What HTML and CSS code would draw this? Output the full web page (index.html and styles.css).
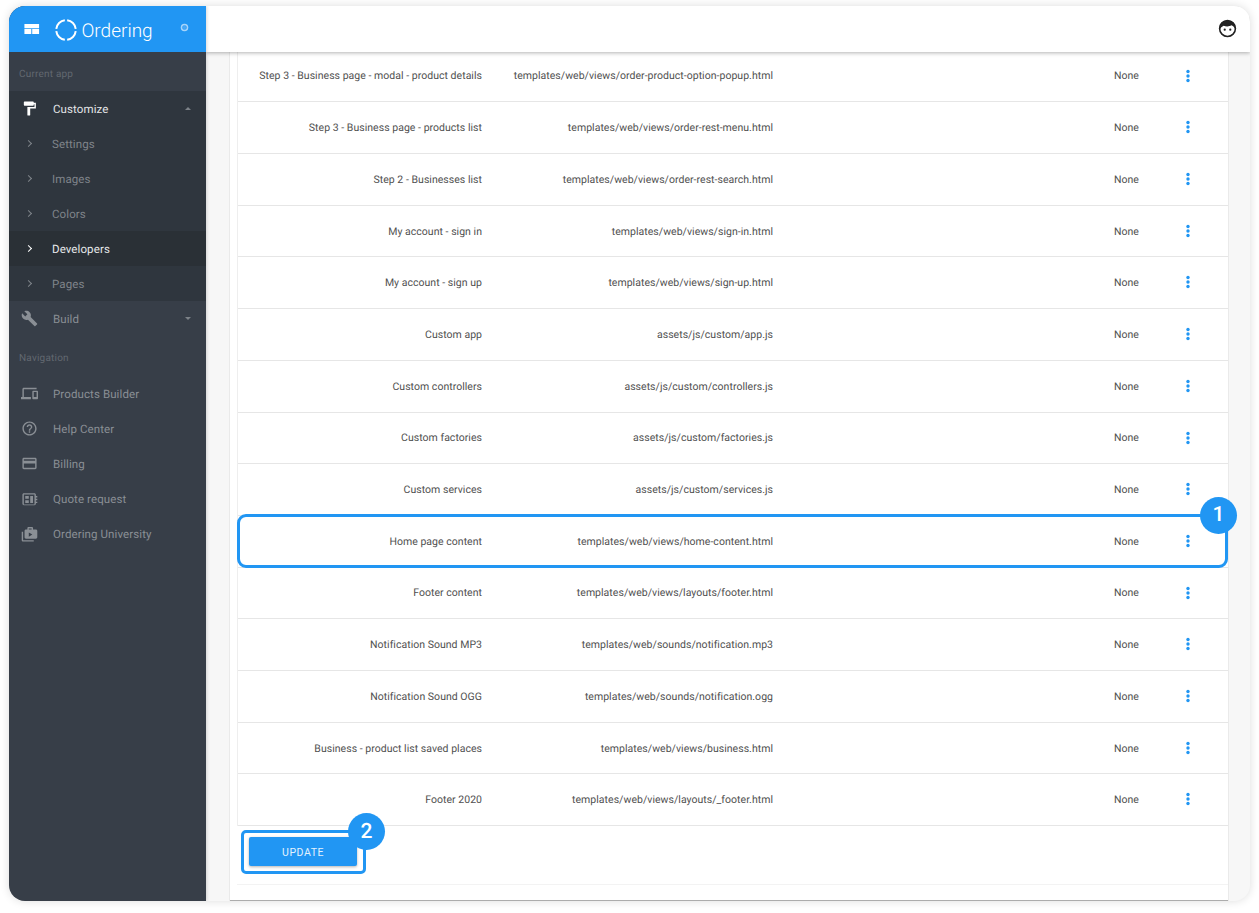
FILE: index.html
```html
<!DOCTYPE html>
<html lang="en">
<head>
<meta charset="utf-8">
<title>Ordering</title>
<link rel="stylesheet" href="styles.css">
</head>
<body>
<div class="window">
  <aside class="sidebar">
    <div class="brand">
      <svg class="brand-menu" viewBox="0 0 16 12"><path d="M0 0h16v4.500H0zM0 5.500h7.500V11H0zM8.500 5.500H16V11H8.500z"/></svg>
      <svg class="brand-ring" viewBox="0 0 24 24"><circle cx="12" cy="12" r="9.800" pathLength="100" stroke-dasharray="21 4" stroke-dashoffset="-2"/></svg>
      <span class="brand-name">Ordering</span>
      <svg class="brand-dot" viewBox="0 0 10 10"><circle cx="5" cy="5" r="4.200" class="dot-o"/><circle cx="5" cy="5" r="2.300" class="dot-i"/></svg>
    </div>
    <div class="nav-label label-first">Current app</div>
    <div class="group">
      <div class="nav-item nav-open">
        <svg class="ic" viewBox="0 0 24 24"><path d="M18 4V3c0-.55-.45-1-1-1H5c-.55 0-1 .45-1 1v4c0 .55.45 1 1 1h12c.55 0 1-.45 1-1V6h1v4H9v11c0 .55.45 1 1 1h2c.55 0 1-.45 1-1v-9h8V4h-3z"/></svg>
        <span>Customize</span><i class="caret caret-up"></i>
      </div>
      <div class="sub-item"><b class="chev"></b><span>Settings</span></div>
      <div class="sub-item"><b class="chev"></b><span>Images</span></div>
      <div class="sub-item"><b class="chev"></b><span>Colors</span></div>
      <div class="sub-item sub-active"><b class="chev"></b><span>Developers</span></div>
      <div class="sub-item"><b class="chev"></b><span>Pages</span></div>
    </div>
    <div class="nav-item">
      <svg class="ic" viewBox="0 0 24 24"><path d="M22.700 19l-9.100-9.100c.9-2.300.4-5-1.500-6.900-2-2-5-2.400-7.400-1.300L9 6 6 9 1.600 4.700C.4 7.100.9 10.100 2.900 12.100c1.900 1.900 4.600 2.400 6.900 1.500l9.100 9.100c.4.4 1 .4 1.400 0l2.300-2.300c.5-.4.5-1.100.1-1.400z"/></svg>
      <span>Build</span><i class="caret"></i>
    </div>
    <div class="nav-label">Navigation</div>
    <div class="nav-item">
      <svg class="ic" viewBox="0 0 24 24"><path d="M4 6h18V4H4c-1.100 0-2 .9-2 2v11H0v3h14v-3H4V6zm19 2h-6c-.55 0-1 .45-1 1v10c0 .55.45 1 1 1h6c.55 0 1-.45 1-1V9c0-.55-.45-1-1-1zm-1 9h-4v-7h4v7z"/></svg>
      <span>Products Builder</span>
    </div>
    <div class="nav-item">
      <svg class="ic" viewBox="0 0 24 24"><path d="M11 18h2v-2h-2v2zm1-16C6.480 2 2 6.480 2 12s4.480 10 10 10 10-4.480 10-10S17.520 2 12 2zm0 18c-4.410 0-8-3.590-8-8s3.590-8 8-8 8 3.590 8 8-3.590 8-8 8zm0-14c-2.210 0-4 1.790-4 4h2c0-1.100.9-2 2-2s2 .9 2 2c0 2-3 1.750-3 5h2c0-2.250 3-2.500 3-5 0-2.210-1.790-4-4-4z"/></svg>
      <span>Help Center</span>
    </div>
    <div class="nav-item">
      <svg class="ic" viewBox="0 0 24 24"><path d="M20 4H4c-1.110 0-1.990.89-1.990 2L2 18c0 1.110.89 2 2 2h16c1.110 0 2-.89 2-2V6c0-1.110-.89-2-2-2zm0 14H4v-6h16v6zm0-10H4V6h16v2z"/></svg>
      <span>Billing</span>
    </div>
    <div class="nav-item">
      <svg class="ic" viewBox="0 0 24 24"><path d="M4 3h15c1 0 2 1 2 2v2h2v2h-2v2h2v2h-2v2h2v2h-2v1c0 1-1 2-2 2H4c-1 0-2-1-2-2V5c0-1 1-2 2-2zm0 2v14h15V5H4zm2 2h5v4H6V7zm7 0h4v10h-4V7zm-7 6h5v4H6v-4z" fill-rule="evenodd"/></svg>
      <span>Quote request</span>
    </div>
    <div class="nav-item">
      <svg class="ic" viewBox="0 0 24 24"><path d="M1 8h2v12h15v2H3c-1.100 0-2-.9-2-2V8zm8-3V3c0-.8.7-1.500 1.500-1.500h5c.8 0 1.500.7 1.500 1.500v2h4c1.100 0 2 .9 2 2v9c0 1.100-.9 2-2 2H7c-1.100 0-2-.9-2-2V7c0-1.100.9-2 2-2h2zm2 0h4V3.500h-4V5zm0 4v6l5-3-5-3z" fill-rule="evenodd"/></svg>
      <span>Ordering University</span>
    </div>
  </aside>

  <div class="main">
    <header class="topbar">
      <svg class="avatar" viewBox="0 0 24 24">
        <circle cx="12" cy="12" r="10" class="face"/>
        <path d="M2 12C2 6 6.500 2 12 2s10 4 10 10c0 .6 0 1-.2 1.500-.6-2.500-2.300-4.700-4.800-5.500-2.600 1.600-7 1.800-9.800.4C5 9.400 3 11 2.300 13.800 2 13 2 12.500 2 12z"/>
        <circle cx="8.500" cy="13.500" r="1.400"/><circle cx="15.500" cy="13.500" r="1.400"/>
      </svg>
    </header>
    <div class="content">
      <section class="card">
        <div class="table">
          <div class="row"><span class="c-name">Step 3 - Business page - modal - product details</span><span class="c-path">templates/web/views/order-product-option-popup.html</span><span class="c-val">None</span><svg class="more" viewBox="0 0 6 14"><circle cx="3" cy="2.500" r="1.700"/><circle cx="3" cy="7" r="1.700"/><circle cx="3" cy="11.500" r="1.700"/></svg></div>
          <div class="row"><span class="c-name">Step 3 - Business page - products list</span><span class="c-path">templates/web/views/order-rest-menu.html</span><span class="c-val">None</span><svg class="more" viewBox="0 0 6 14"><circle cx="3" cy="2.500" r="1.700"/><circle cx="3" cy="7" r="1.700"/><circle cx="3" cy="11.500" r="1.700"/></svg></div>
          <div class="row"><span class="c-name">Step 2 - Businesses list</span><span class="c-path">templates/web/views/order-rest-search.html</span><span class="c-val">None</span><svg class="more" viewBox="0 0 6 14"><circle cx="3" cy="2.500" r="1.700"/><circle cx="3" cy="7" r="1.700"/><circle cx="3" cy="11.500" r="1.700"/></svg></div>
          <div class="row"><span class="c-name">My account - sign in</span><span class="c-path">templates/web/views/sign-in.html</span><span class="c-val">None</span><svg class="more" viewBox="0 0 6 14"><circle cx="3" cy="2.500" r="1.700"/><circle cx="3" cy="7" r="1.700"/><circle cx="3" cy="11.500" r="1.700"/></svg></div>
          <div class="row"><span class="c-name">My account - sign up</span><span class="c-path">templates/web/views/sign-up.html</span><span class="c-val">None</span><svg class="more" viewBox="0 0 6 14"><circle cx="3" cy="2.500" r="1.700"/><circle cx="3" cy="7" r="1.700"/><circle cx="3" cy="11.500" r="1.700"/></svg></div>
          <div class="row"><span class="c-name">Custom app</span><span class="c-path">assets/js/custom/app.js</span><span class="c-val">None</span><svg class="more" viewBox="0 0 6 14"><circle cx="3" cy="2.500" r="1.700"/><circle cx="3" cy="7" r="1.700"/><circle cx="3" cy="11.500" r="1.700"/></svg></div>
          <div class="row"><span class="c-name">Custom controllers</span><span class="c-path">assets/js/custom/controllers.js</span><span class="c-val">None</span><svg class="more" viewBox="0 0 6 14"><circle cx="3" cy="2.500" r="1.700"/><circle cx="3" cy="7" r="1.700"/><circle cx="3" cy="11.500" r="1.700"/></svg></div>
          <div class="row"><span class="c-name">Custom factories</span><span class="c-path">assets/js/custom/factories.js</span><span class="c-val">None</span><svg class="more" viewBox="0 0 6 14"><circle cx="3" cy="2.500" r="1.700"/><circle cx="3" cy="7" r="1.700"/><circle cx="3" cy="11.500" r="1.700"/></svg></div>
          <div class="row"><span class="c-name">Custom services</span><span class="c-path">assets/js/custom/services.js</span><span class="c-val">None</span><svg class="more" viewBox="0 0 6 14"><circle cx="3" cy="2.500" r="1.700"/><circle cx="3" cy="7" r="1.700"/><circle cx="3" cy="11.500" r="1.700"/></svg></div>
          <div class="row row-mark"><span class="c-name">Home page content</span><span class="c-path">templates/web/views/home-content.html</span><span class="c-val">None</span><svg class="more" viewBox="0 0 6 14"><circle cx="3" cy="2.500" r="1.700"/><circle cx="3" cy="7" r="1.700"/><circle cx="3" cy="11.500" r="1.700"/></svg><span class="badge badge-row">1</span></div>
          <div class="row"><span class="c-name">Footer content</span><span class="c-path">templates/web/views/layouts/footer.html</span><span class="c-val">None</span><svg class="more" viewBox="0 0 6 14"><circle cx="3" cy="2.500" r="1.700"/><circle cx="3" cy="7" r="1.700"/><circle cx="3" cy="11.500" r="1.700"/></svg></div>
          <div class="row"><span class="c-name">Notification Sound MP3</span><span class="c-path">templates/web/sounds/notification.mp3</span><span class="c-val">None</span><svg class="more" viewBox="0 0 6 14"><circle cx="3" cy="2.500" r="1.700"/><circle cx="3" cy="7" r="1.700"/><circle cx="3" cy="11.500" r="1.700"/></svg></div>
          <div class="row"><span class="c-name">Notification Sound OGG</span><span class="c-path">templates/web/sounds/notification.ogg</span><span class="c-val">None</span><svg class="more" viewBox="0 0 6 14"><circle cx="3" cy="2.500" r="1.700"/><circle cx="3" cy="7" r="1.700"/><circle cx="3" cy="11.500" r="1.700"/></svg></div>
          <div class="row"><span class="c-name">Business - product list saved places</span><span class="c-path">templates/web/views/business.html</span><span class="c-val">None</span><svg class="more" viewBox="0 0 6 14"><circle cx="3" cy="2.500" r="1.700"/><circle cx="3" cy="7" r="1.700"/><circle cx="3" cy="11.500" r="1.700"/></svg></div>
          <div class="row"><span class="c-name">Footer 2020</span><span class="c-path">templates/web/views/layouts/_footer.html</span><span class="c-val">None</span><svg class="more" viewBox="0 0 6 14"><circle cx="3" cy="2.500" r="1.700"/><circle cx="3" cy="7" r="1.700"/><circle cx="3" cy="11.500" r="1.700"/></svg></div>
        </div>
        <div class="actions">
          <div class="btn-mark">
            <button class="btn" type="button">UPDATE</button>
            <span class="badge badge-btn">2</span>
          </div>
        </div>
      </section>
    </div>
  </div>
</div>
</body>
</html>
```
FILE: styles.css
```css
* { box-sizing: border-box; }
html, body { margin: 0; height: 100%; background: #fff; overflow: hidden; }
body { padding: 6px 9px 12px; font-family: Roboto, "Liberation Sans", sans-serif; text-rendering: geometricPrecision; }

.window {
  display: flex;
  width: 1241px;
  height: 895px;
  border-radius: 16px;
  overflow: hidden;
  background: #f7f7f7;
  box-shadow: 0 0 10px rgba(0, 0, 0, .14);
}

/* Sidebar */
.sidebar { width: 197px; flex: none; background: #373e48; color: #8a8f95; font-size: 11.500px; letter-spacing: .1px; z-index: 2; box-shadow: 1px 0 3px rgba(0, 0, 0, .15); }
.brand { display: flex; align-items: center; height: 46px; background: #2196f3; color: #fff; padding: 3px 0 0 15px; position: relative; }
.brand-menu { width: 15.500px; height: 11px; fill: #fff; margin-right: 15px; margin-top: -2px; }
.brand-ring { width: 24px; height: 24px; fill: none; stroke: #fff; stroke-width: 2; margin-top: -2px; margin-left: -1px; }
.brand-name { font-size: 19px; font-weight: 300; letter-spacing: 0; margin-left: 4px; }
.brand-dot { width: 9px; height: 9px; margin-left: 27px; margin-top: -7px; }
.dot-o { fill: #a9d5fa; }
.dot-i { fill: #4aa8f5; stroke: #2196f3; stroke-width: .6; }

.nav-label { height: 40px; display: flex; align-items: center; padding: 5px 0 0 10px; font-size: 10px; color: #626870; letter-spacing: .2px; }
.label-first { height: 39px; }
.nav-item { display: flex; align-items: center; height: 35.100px; position: relative; padding-left: 12px; }
.ic { width: 17px; height: 17px; fill: #8a8f95; margin-right: 15px; flex: none; }
.nav-open { color: #e3e5e7; }
.nav-open .ic { fill: #fff; }
.caret { position: absolute; left: 175.500px; top: 16px; border: 3px solid transparent; border-top-color: #7d8288; border-bottom-width: 0; }
.caret-up { border-top-width: 0; border-bottom: 3px solid #7d8288; }

.group { background: #2f363e; }
.sub-item { display: flex; align-items: center; height: 35px; padding-left: 17px; color: #7f848a; }
.chev { width: 5px; height: 5px; border: solid currentColor; border-width: 1.200px 1.200px 0 0; transform: rotate(45deg); margin-right: 21px; flex: none; }
.sub-active { background: #2a3036; color: #e6e8ea; }
.sub-active .chev { color: #fff; }

/* Main */
.main { flex: 1; min-width: 0; display: flex; flex-direction: column; }
.topbar { height: 46px; flex: none; background: #fff; display: flex; align-items: center; justify-content: flex-end; padding-right: 13px; box-shadow: 0 1px 4px rgba(0, 0, 0, .3); z-index: 1; }
.avatar { width: 19px; height: 19px; margin-top: -1px; fill: #222; }
.avatar .face { fill: #fff; stroke: #222; stroke-width: 2; }

.content { flex: 1; min-height: 0; padding: 0 22px 1px 24px; overflow: hidden; }
.card { background: #fff; height: calc(100% + 1.400px); margin-top: -1.400px; padding-left: 7px; box-shadow: 0 1px 1px rgba(0, 0, 0, .3); }
.table { border-left: 1px solid #eee; }
.row {
  display: grid;
  grid-template-columns: 244px 291px 1fr;
  align-items: center;
  height: 51.710px;
  border-bottom: 1px solid #e6e6e6;
  position: relative;
  font-size: 10.500px;
  letter-spacing: .03px;
  color: #505050;
}
.c-name { text-align: right; }
.c-path { text-align: right; }
.c-val { padding-left: 341px; }
.more { width: 6px; height: 14px; fill: #2196f3; position: absolute; left: 947px; top: 18px; }

.row-mark::after {
  content: "";
  position: absolute;
  inset: -1.500px 0 -1px -1px;
  border: 3px solid #2196f3;
  border-radius: 9px;
  pointer-events: none;
}
.badge {
  position: absolute;
  width: 37px;
  height: 37px;
  border-radius: 50%;
  background: #2196f3;
  color: #fff;
  display: flex;
  align-items: center;
  justify-content: center;
  font-size: 21px;
  font-weight: 500;
  letter-spacing: 0;
  z-index: 1;
}
.badge-row { right: -9px; top: -19px; }
.badge-btn { right: -22px; top: -20px; }

.actions { height: 59px; padding: 4px 0 0 4px; border-bottom: 1px solid #f3f3f3; }
.btn-mark { position: relative; display: inline-block; border: 3px solid #2196f3; border-radius: 5px; padding: 4px 6px 5px 5px; line-height: 0; }
.btn {
  width: 108px;
  height: 29px;
  border: 0;
  border-radius: 2px;
  padding: 1px 0 0;
  background: #2196f3;
  color: #e3f2fd;
  font: 400 10.500px Roboto, "Liberation Sans", sans-serif;
  letter-spacing: .55px;
  box-shadow: 0 1px 3px rgba(0, 0, 0, .3);
}
```
